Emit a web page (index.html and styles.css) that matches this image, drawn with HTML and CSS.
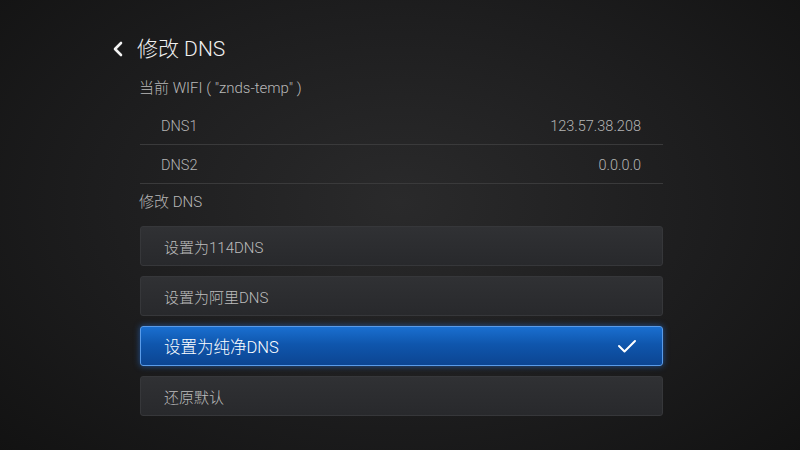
FILE: index.html
```html
<!doctype html>
<html lang="zh">
<head>
	<meta charset="UTF-8">
	<meta name="viewport" content="width=device-width, initial-scale=1.0">
	<title>修改 DNS</title>
	<link rel="stylesheet" href="styles.css">
</head>
<body>
<div class="page">
	<div class="head">
		<svg class="back" width="12" height="16" viewBox="0 0 12 16">
			<path d="M9 2 L3 8 L9 14" fill="none" stroke="#f2f2f2" stroke-width="2.6" stroke-linecap="round" stroke-linejoin="round"/>
		</svg>
		<h1>修改 DNS</h1>
	</div>
	<div class="panel">
		<p class="wifi">当前 WIFI ( "znds-temp" )</p>
		<div class="rows">
			<div class="row"><span>DNS1</span><span>123.57.38.208</span></div>
			<div class="row"><span>DNS2</span><span>0.0.0.0</span></div>
		</div>
		<p class="label">修改 DNS</p>
		<div class="btns">
			<div class="btn">设置为114DNS</div>
			<div class="btn">设置为阿里DNS</div>
			<div class="btn on">设置为纯净DNS
				<svg class="tick" width="20" height="16" viewBox="0 0 20 16">
					<path d="M2 8 L7.5 13.5 L18 3" fill="none" stroke="#ffffff" stroke-width="2" stroke-linecap="round" stroke-linejoin="round"/>
				</svg>
			</div>
			<div class="btn">还原默认</div>
		</div>
	</div>
</div>
</body>
</html>
```

FILE: styles.css
```css
*{
	box-sizing: border-box;
}
html,body{
	margin: 0;
	height: 100%;
}
body{
	background: radial-gradient(ellipse 70% 80% at 50% 45%, #2a2a2b 0%, #1d1d1e 55%, #121212 100%);
	font-family: Roboto, "Noto Sans CJK SC", sans-serif;
	font-weight: 300;
	color: #c4c4c4;
	overflow: hidden;
}
.page{
	padding-top: 35px;
}
.head{
	display: flex;
	align-items: center;
	height: 28px;
	padding-left: 112px;
}
.back{
	margin-right: 13px;
}
.head h1{
	margin: 0;
	font-size: 21px;
	font-weight: 300;
	color: #f0f0f0;
	line-height: 28px;
}
.panel{
	margin-left: 140px;
	width: 523px;
}
.wifi{
	margin: 15px 0 0 -1px;
	font-size: 15px;
	line-height: 20px;
	color: #b8b8b8;
}
.rows{
	margin-top: 8px;
}
.row{
	display: flex;
	justify-content: space-between;
	align-items: center;
	height: 39px;
	padding: 2px 22px 0 21px;
	border-bottom: 1px solid #3a3a3b;
	font-size: 14.5px;
	color: #b4b4b4;
}
.label{
	margin: 8px 0 0 -1px;
	font-size: 15px;
	line-height: 20px;
	color: #b8b8b8;
}
.btns{
	margin-top: 14px;
	display: flex;
	flex-direction: column;
	gap: 10px;
}
.btn{
	display: flex;
	justify-content: space-between;
	align-items: center;
	height: 40px;
	padding: 0 25px 0 23px;
	background: linear-gradient(#303134, #28292c);
	border: 1px solid #36373a;
	border-radius: 3px;
	font-size: 15px;
	color: #bdbdbd;
}
.btn.on{
	background: linear-gradient(#1a6fd0 0%, #0f56ad 45%, #0c4592 100%);
	border: 1px solid #5a9be8;
	box-shadow: 0 0 6px rgba(40, 120, 230, 0.6);
	color: #ffffff;
	font-size: 16.5px;
}
```
